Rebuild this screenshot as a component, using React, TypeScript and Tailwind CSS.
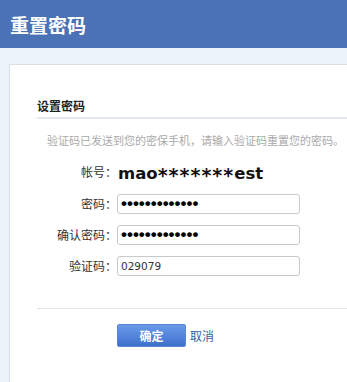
export default function App() {
  const cjk = { fontFamily: '"Noto Sans CJK SC", "DejaVu Sans", sans-serif' };
  return (
    <div className="flex h-[382px] w-[347px] flex-col overflow-hidden bg-[#ecf3fb]" style={cjk}>
      <div className="flex h-12 shrink-0 items-center bg-[#4a72b5] pl-[10px]">
        <h1 className="text-[19px] font-bold leading-none text-white">重置密码</h1>
      </div>

      <div className="ml-[9px] mt-4 flex-1 border-l border-t border-[#dcdfe3] bg-white pl-[27px]">
        <div className="border-b-2 border-[#e3e7ef] pb-[3px] pt-[33px]">
          <h2 className="text-[12px] font-bold leading-4 text-[#222]">设置密码</h2>
        </div>

        <p className="mt-[13px] whitespace-nowrap pl-[10px] text-[11px] leading-4 text-[#a9a9a9]">
          验证码已发送到您的密保手机，请输入验证码重置您的密码。
        </p>

        <div className="mt-[12px] flex flex-col">
          <div className="flex h-6 items-center">
            <span className="w-20 text-right text-[12px] text-[#333]">帐号：</span>
            <span
              className="ml-[1px] text-[16.5px] font-bold text-[#111]"
              style={{ fontFamily: '"DejaVu Sans", sans-serif' }}
            >
              mao
              <span className="relative top-[3px] text-[19px] tracking-[1px]">*******</span>
              est
            </span>
          </div>

          <FormRow label="密码：" className="mt-[10px]">
            <input
              type="password"
              readOnly
              defaultValue="1234567890123"
              className="h-5 w-[183px] rounded-[3px] border border-[#c9c9c9] px-[3px] text-[17px] font-bold leading-none text-black outline-none"
              style={{ fontFamily: '"Liberation Sans", sans-serif' }}
            />
          </FormRow>

          <FormRow label="确认密码：" className="mt-[11px]">
            <input
              type="password"
              readOnly
              defaultValue="1234567890123"
              className="h-5 w-[183px] rounded-[3px] border border-[#c9c9c9] px-[3px] text-[17px] font-bold leading-none text-black outline-none"
              style={{ fontFamily: '"Liberation Sans", sans-serif' }}
            />
          </FormRow>

          <FormRow label="验证码：" className="mt-[11px]">
            <input
              type="text"
              readOnly
              defaultValue="029079"
              className="h-5 w-[183px] rounded-[3px] border border-[#c9c9c9] px-[3px] text-[10.5px] text-[#333] outline-none"
              style={{ fontFamily: '"DejaVu Sans", sans-serif' }}
            />
          </FormRow>
        </div>

        <div className="mt-8 border-t border-[#e5e5e5]" />

        <div className="mt-[15px] flex items-center pl-20">
          <button className="h-[23px] w-[69px] rounded-[2px] border border-[#5a86d6] bg-gradient-to-b from-[#6a9bea] to-[#3e70cb] text-[12px] font-bold text-white">
            确定
          </button>
          <a className="ml-[4px] text-[12px] text-[#34609c]">取消</a>
        </div>
      </div>
    </div>
  );
}

function FormRow({
  label,
  className,
  children,
}: {
  label: string;
  className?: string;
  children: React.ReactNode;
}) {
  return (
    <div className={`flex h-5 items-center ${className ?? ""}`}>
      <span className="w-20 text-right text-[12px] text-[#333]">{label}</span>
      {children}
    </div>
  );
}
